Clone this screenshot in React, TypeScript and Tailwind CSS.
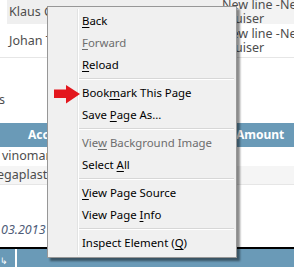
import type { ReactNode } from 'react'

const menuFont = { fontFamily: '"Noto Sans", "Open Sans", sans-serif' }

type Item = { label: ReactNode; disabled?: boolean } | 'sep'

// mnemonic letter helper
function U({ children }: { children: ReactNode }) {
  return <span className="underline underline-offset-[2px]">{children}</span>
}

const items: Item[] = [
  { label: <><U>B</U>ack</> },
  { label: <><U>F</U>orward</>, disabled: true },
  { label: <><U>R</U>eload</> },
  'sep',
  { label: <>Book<U>m</U>ark This Page</> },
  { label: <>Save <U>P</U>age As...</> },
  'sep',
  { label: <>Vie<U>w</U> Background Image</>, disabled: true },
  { label: <>Select <U>A</U>ll</> },
  'sep',
  { label: <><U>V</U>iew Page Source</> },
  { label: <>View Page <U>I</U>nfo</> },
  'sep',
  { label: <>Inspect Element (<U>Q</U>)</> },
]

function ContextMenu() {
  return (
    <div
      className="absolute left-[47px] top-[6px] w-[190px] border border-[#979797] bg-[#f0f0f0] px-[2px] pt-[3px] pb-[3px] shadow-[3px_3px_2px_rgba(0,0,0,0.45)] text-[11.4px]"
      style={menuFont}
    >
      {/* icon gutter */}
      <div className="absolute left-[29px] top-[2px] bottom-[2px] w-px bg-[#e2e3e3]" />
      <div className="absolute left-[30px] top-[2px] bottom-[2px] w-px bg-white" />
      {items.map((it, i) =>
        it === 'sep' ? (
          <div key={i} className="h-[6px] flex flex-col justify-center pl-[28px]">
            <div className="h-px bg-[#d7d7d7]" />
            <div className="h-px bg-white" />
          </div>
        ) : (
          <div
            key={i}
            className={`relative h-[22px] flex items-center pl-[32px] ${it.disabled ? 'text-[#6d6d6d]' : 'text-black'}`}
          >
            <span className="whitespace-pre">{it.label}</span>
          </div>
        ),
      )}
    </div>
  )
}

function Arrow() {
  return (
    <svg className="absolute left-[54px] top-[85px]" width="27" height="19" viewBox="0 0 27 19">
      <rect x="0" y="4.5" width="13" height="8.5" fill="#e3161d" />
      <polygon points="12,0 26,9 12,18.5" fill="#e3161d" />
    </svg>
  )
}

export default function App() {
  return (
    <div
      className="relative w-[294px] h-[268px] overflow-hidden bg-white text-[12.5px] text-[#4d4d4d]"
      style={{ fontFamily: '"Noto Sans", "Open Sans", sans-serif' }}
    >
      {/* upper table rows */}
      <div className="flex h-[25px] border-b border-white">
        <div className="w-[7px]" />
        <div className="w-[213px] bg-[#efefef] pl-[2px] flex items-center">Klaus Gruber</div>
        <div className="flex-1 bg-[#f3f3f3] pl-[2px] overflow-hidden leading-[14px] -mt-[2px] whitespace-nowrap">
          <div>New line -New</div>
          <div>Cruiser</div>
        </div>
      </div>
      <div className="flex h-[33px] border-b border-[#e6e6e6]">
        <div className="w-[7px]" />
        <div className="w-[213px] pl-[2px] flex items-center">Johan Tiller</div>
        <div className="flex-1 pl-[2px] pt-[2px] overflow-hidden leading-[14px] whitespace-nowrap">
          <div>New line -New</div>
          <div>Cruiser</div>
        </div>
      </div>

      <div className="h-[65px] flex items-center pt-[20px] -ml-[1px]">s</div>

      {/* header */}
      <div className="h-[24px] flex items-center bg-[#6a9ab7] text-white font-bold text-[12px]">
        <div className="w-[28px]" />
        <div className="flex-1">Account</div>
        <div className="w-[58px]">Amount</div>
      </div>
      <div className="h-[19px] flex items-center pl-[2px]">vinomania</div>
      <div className="h-[19px] flex items-center bg-[#f5f5f5] border-b border-[#e6e6e6] -ml-[3px]">egaplast</div>

      <div className="h-[62px] flex items-end pb-[7px] pl-[1px] italic text-[#4f5d78]">03.2013 10:22</div>

      {/* bottom */}
      <div className="h-[2px] bg-black" />
      <div className="h-[18px] flex bg-[#6a9ab7]">
        <div className="w-[15px] flex items-end text-white text-[9px] leading-[12px]">↳</div>
        <div className="w-[2px] bg-white" />
      </div>

      <ContextMenu />
      <Arrow />
    </div>
  )
}
